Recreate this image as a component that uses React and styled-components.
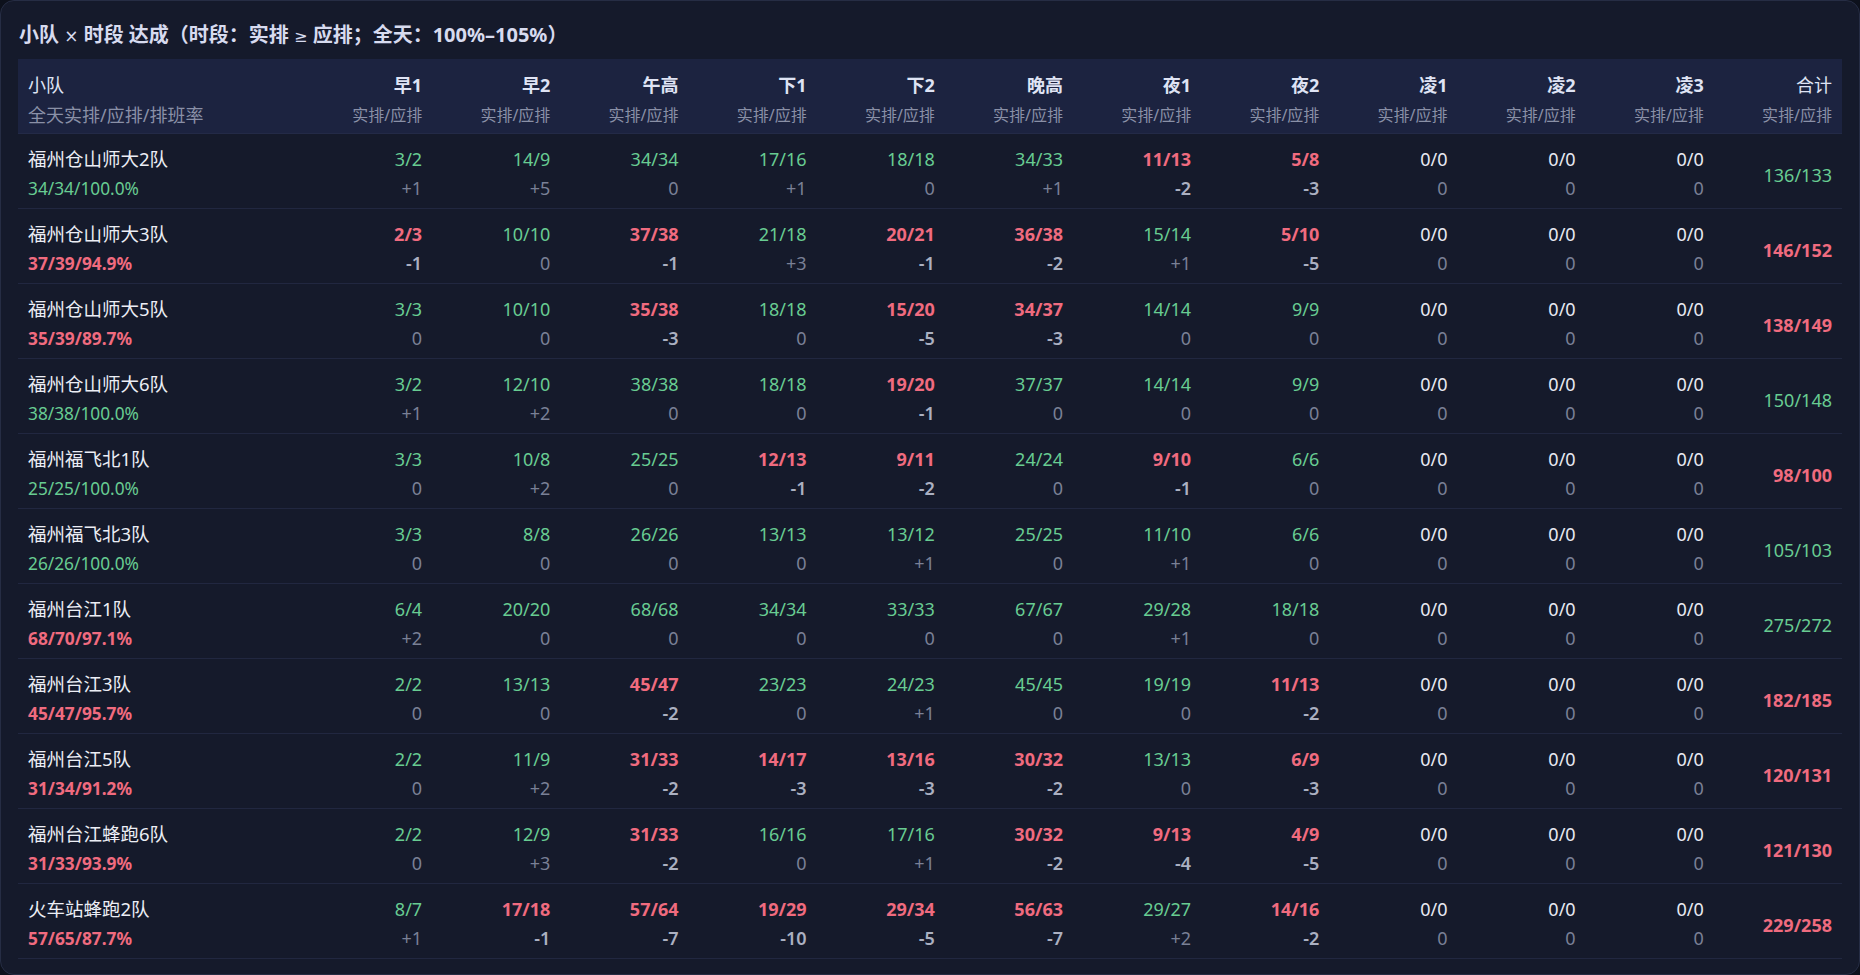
import React from "react";
import styled, { createGlobalStyle } from "styled-components";

const GlobalStyle = createGlobalStyle`
  html, body {
    margin: 0;
    padding: 0;
    background: #0d111c;
  }
  body {
    font-family: "Noto Sans", "Noto Sans CJK SC", sans-serif;
  }
  * { box-sizing: border-box; }
`;

const Panel = styled.section`
  height: 100vh;
  border: 1px solid #262d44;
  border-radius: 14px;
  background: #151a2b;
  padding: 21px 17px 14px;
  overflow: hidden;
`;

const Title = styled.h2`
  margin: 0 0 11px 1px;
  height: 26px;
  overflow: hidden;
  font-family: "Noto Sans", "Noto Sans CJK SC", sans-serif;
  font-size: 20px;
  line-height: 26px;
  font-weight: 700;
  color: #d7dbef;
  letter-spacing: 0;
  white-space: nowrap;
`;

const Symbol = styled.span`
  font-family: "DejaVu Sans", "Liberation Sans", sans-serif;
  font-size: ${(p) => p.$size || "16px"};
  font-weight: 400;
  line-height: 0;
`;

const COLS = "286px repeat(12, 1fr)";

const HeaderRow = styled.div`
  display: grid;
  grid-template-columns: ${COLS};
  background: #1c2340;
  border-bottom: 1px solid #232a47;
`;

const HeadCell = styled.div`
  padding: 12px 10px 3px;
  text-align: ${(p) => (p.$first ? "left" : "right")};
  display: flex;
  flex-direction: column;
`;

const HeadLabel = styled.span`
  font-size: 18px;
  line-height: 28px;
  color: #dfe3f4;
  font-weight: ${(p) => (p.$bold ? 700 : 400)};
`;

const HeadSub = styled.span`
  margin-top: 2px;
  line-height: 29px;
  color: #8a90a7;
  font-size: ${(p) => (p.$big ? "18px" : "16px")};
`;

const Row = styled.div`
  display: grid;
  grid-template-columns: ${COLS};
  border-bottom: 1px solid #212740;
`;

const Cell = styled.div`
  padding: 11px 10px 5px;
  display: flex;
  flex-direction: column;
  text-align: ${(p) => (p.$first ? "left" : "right")};
`;

const TotalCell = styled.div`
  padding: 7px 10px 0;
  display: flex;
  align-items: center;
  justify-content: flex-end;
`;

const colorFor = (s) =>
  s === "ok" ? "#68cc92" : s === "bad" ? "#f06b7f" : "#e8eaf2";

const TeamName = styled.span`
  font-size: 18.5px;
  line-height: 28px;
  color: #eceef5;
`;

const Value = styled.span`
  font-size: 18px;
  line-height: 28px;
  color: ${(p) => colorFor(p.$status)};
  font-weight: ${(p) => (p.$status === "bad" ? 700 : 400)};
`;

const SubValue = styled(Value)`
  margin-top: 1px;
  font-size: 17.3px;
  line-height: 29px;
`;

const Diff = styled.span`
  margin-top: 1px;
  font-size: 18px;
  line-height: 29px;
  color: ${(p) => (p.$neg ? "#abb0c1" : "#7a8096")};
  font-weight: ${(p) => (p.$neg ? 600 : 400)};
`;

const PERIODS = ["早1", "早2", "午高", "下1", "下2", "晚高", "夜1", "夜2", "凌1", "凌2", "凌3"];

const DATA = [
  ["福州仓山师大2队", "34/34/100.0%", true, ["3/2", "14/9", "34/34", "17/16", "18/18", "34/33", "11/13", "5/8"], "136/133", true],
  ["福州仓山师大3队", "37/39/94.9%", false, ["2/3", "10/10", "37/38", "21/18", "20/21", "36/38", "15/14", "5/10"], "146/152", false],
  ["福州仓山师大5队", "35/39/89.7%", false, ["3/3", "10/10", "35/38", "18/18", "15/20", "34/37", "14/14", "9/9"], "138/149", false],
  ["福州仓山师大6队", "38/38/100.0%", true, ["3/2", "12/10", "38/38", "18/18", "19/20", "37/37", "14/14", "9/9"], "150/148", true],
  ["福州福飞北1队", "25/25/100.0%", true, ["3/3", "10/8", "25/25", "12/13", "9/11", "24/24", "9/10", "6/6"], "98/100", false],
  ["福州福飞北3队", "26/26/100.0%", true, ["3/3", "8/8", "26/26", "13/13", "13/12", "25/25", "11/10", "6/6"], "105/103", true],
  ["福州台江1队", "68/70/97.1%", false, ["6/4", "20/20", "68/68", "34/34", "33/33", "67/67", "29/28", "18/18"], "275/272", true],
  ["福州台江3队", "45/47/95.7%", false, ["2/2", "13/13", "45/47", "23/23", "24/23", "45/45", "19/19", "11/13"], "182/185", false],
  ["福州台江5队", "31/34/91.2%", false, ["2/2", "11/9", "31/33", "14/17", "13/16", "30/32", "13/13", "6/9"], "120/131", false],
  ["福州台江蜂跑6队", "31/33/93.9%", false, ["2/2", "12/9", "31/33", "16/16", "17/16", "30/32", "9/13", "4/9"], "121/130", false],
  ["火车站蜂跑2队", "57/65/87.7%", false, ["8/7", "17/18", "57/64", "19/29", "29/34", "56/63", "29/27", "14/16"], "229/258", false],
];

function periodCell(v) {
  const [a, b] = v.split("/").map(Number);
  const d = a - b;
  const status = b === 0 && a === 0 ? "zero" : d >= 0 ? "ok" : "bad";
  const diff = d > 0 ? `+${d}` : `${d}`;
  return { status, diff, neg: d < 0 };
}

export default function App() {
  return (
    <>
      <GlobalStyle />
      <Panel>
        <Title>
          小队 <Symbol $size="17px">×</Symbol> 时段 达成（时段：实排 <Symbol>≥</Symbol> 应排；全天：100%–105%）
        </Title>
        <div>
          <HeaderRow>
            <HeadCell $first>
              <HeadLabel>小队</HeadLabel>
              <HeadSub $big>全天实排/应排/排班率</HeadSub>
            </HeadCell>
            {PERIODS.map((p) => (
              <HeadCell key={p}>
                <HeadLabel $bold>{p}</HeadLabel>
                <HeadSub>实排/应排</HeadSub>
              </HeadCell>
            ))}
            <HeadCell>
              <HeadLabel>合计</HeadLabel>
              <HeadSub>实排/应排</HeadSub>
            </HeadCell>
          </HeaderRow>
          {DATA.map(([name, day, dayOk, vals, total, totalOk]) => {
            const all = [...vals, "0/0", "0/0", "0/0"];
            return (
              <Row key={name}>
                <Cell $first>
                  <TeamName>{name}</TeamName>
                  <SubValue $status={dayOk ? "ok" : "bad"}>{day}</SubValue>
                </Cell>
                {all.map((v, i) => {
                  const c = periodCell(v);
                  return (
                    <Cell key={i}>
                      <Value $status={c.status}>{v}</Value>
                      <Diff $neg={c.neg}>{c.diff}</Diff>
                    </Cell>
                  );
                })}
                <TotalCell>
                  <Value $status={totalOk ? "ok" : "bad"}>{total}</Value>
                </TotalCell>
              </Row>
            );
          })}
        </div>
      </Panel>
    </>
  );
}
